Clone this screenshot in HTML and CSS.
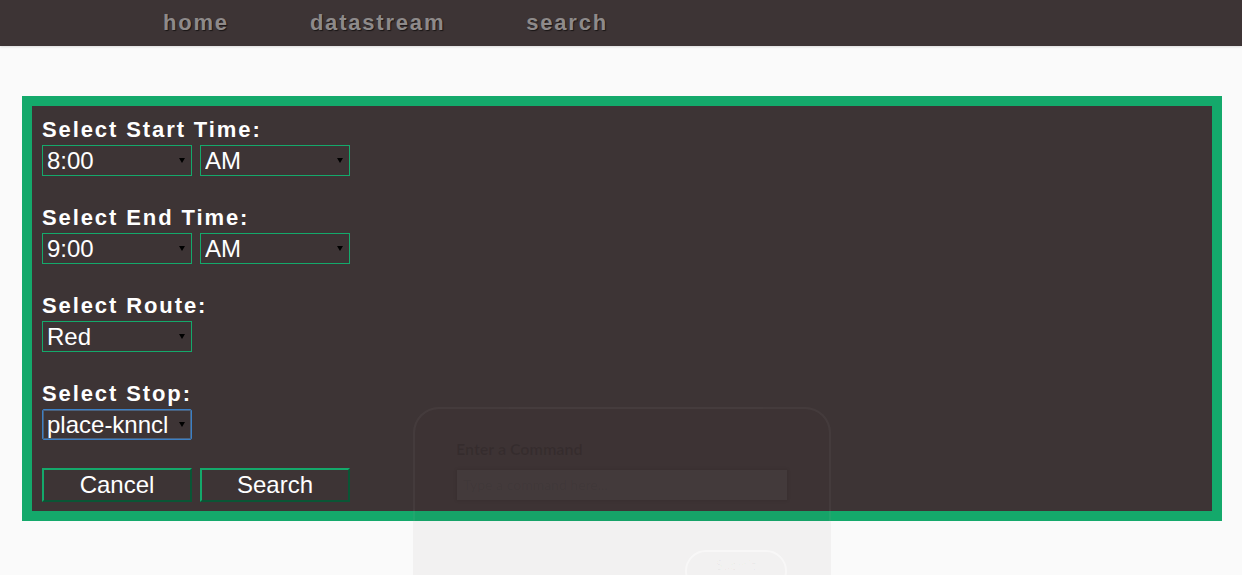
FILE: index.html
```html
<!DOCTYPE html>
<html lang="en">
<head>
<meta charset="utf-8">
<title>Search</title>
<link rel="stylesheet" href="styles.css">
</head>
<body>
<nav class="topnav">
  <a class="nav-link" href="#">home</a>
  <a class="nav-link" href="#">datastream</a>
  <a class="nav-link" href="#">search</a>
</nav>

<main class="panel">
  <div class="field">
    <label class="field-label">Select Start Time:</label>
    <div class="row">
      <span class="sel"><select class="select"><option>8:00</option></select></span>
      <span class="sel"><select class="select"><option>AM</option></select></span>
    </div>
  </div>
  <div class="field">
    <label class="field-label">Select End Time:</label>
    <div class="row">
      <span class="sel"><select class="select"><option>9:00</option></select></span>
      <span class="sel"><select class="select"><option>AM</option></select></span>
    </div>
  </div>
  <div class="field">
    <label class="field-label">Select Route:</label>
    <div class="row">
      <span class="sel"><select class="select"><option>Red</option></select></span>
    </div>
  </div>
  <div class="field">
    <label class="field-label">Select Stop:</label>
    <div class="row">
      <span class="sel"><select class="select select-focus"><option>place-knncl</option></select></span>
    </div>
  </div>
  <div class="actions">
    <button class="btn" type="button">Cancel</button>
    <button class="btn" type="button">Search</button>
  </div>
</main>

<div class="modal">
  <div class="modal-title">Enter a Command</div>
  <div class="modal-input">Type a command here...</div>
  <div class="modal-actions"><span class="modal-btn">Submit</span></div>
</div>
</body>
</html>
```

FILE: styles.css
```css
html, body {
  margin: 0;
  padding: 0;
}

body {
  background: #fafafa;
  font-family: "Liberation Sans", Arial, sans-serif;
  height: 575px;
  overflow: hidden;
  position: relative;
}

.topnav {
  height: 46px;
  background: #3d3435;
  box-shadow: 0 1px 2px rgba(0, 0, 0, 0.12);
  display: flex;
  gap: 81px;
  padding-left: 163px;
}

.nav-link {
  font-weight: bold;
  font-size: 22px;
  line-height: 46px;
  letter-spacing: 1.8px;
  color: #8e8a8a;
  text-decoration: none;
  text-shadow: 1px 1px 1px rgba(0, 0, 0, 0.6);
}

.panel {
  display: block;
  box-sizing: border-box;
  width: 1200px;
  margin: 50px 20px 0 22px;
  border: 10px solid #14a96b;
  background: #3d3435;
  padding: 11px 10px 9px;
}

.field {
  margin-bottom: 29px;
}

.field:nth-last-child(2) {
  margin-bottom: 28px;
}

.field-label {
  display: block;
  color: #fff;
  font-weight: bold;
  font-size: 22px;
  line-height: 25px;
  letter-spacing: 1.9px;
  margin-bottom: 3px;
}

.row {
  display: flex;
  gap: 8px;
}

.sel {
  position: relative;
  display: block;
  width: 150px;
  height: 31px;
}

.sel::after {
  content: "";
  position: absolute;
  right: 7px;
  top: 13px;
  width: 0;
  height: 0;
  border-left: 3px solid transparent;
  border-right: 3px solid transparent;
  border-top: 5px solid #000;
  pointer-events: none;
}

.select {
  -webkit-appearance: none;
  appearance: none;
  box-sizing: border-box;
  width: 150px;
  height: 31px;
  margin: 0;
  border: 1px solid #14a96b;
  border-radius: 0;
  background: transparent;
  color: #fff;
  font-family: "Liberation Sans", Arial, sans-serif;
  font-size: 24px;
  padding: 0 3px 0 4px;
  line-height: 29px;
  outline: none;
}

.select-focus {
  border-color: #3b80c6;
  border-radius: 2px;
  box-shadow: inset 0 0 0 1px rgba(90, 150, 210, 0.45);
}

.actions {
  display: flex;
  gap: 8px;
}

.btn {
  box-sizing: border-box;
  width: 150px;
  height: 34px;
  margin: 0;
  padding: 0;
  border: 2px outset #14a96b;
  background: transparent;
  color: #fff;
  font-family: "Liberation Sans", Arial, sans-serif;
  font-size: 24px;
  line-height: 30px;
}

.modal {
  position: absolute;
  left: 413px;
  top: 407px;
  width: 418px;
  height: 168px;
  overflow: hidden;
  box-sizing: border-box;
  border: 2px solid rgba(255, 255, 255, 0.045);
  border-bottom: none;
  border-radius: 26px 26px 0 0;
  background: rgba(61, 52, 53, 0.045);
  padding: 30px 0 0 41px;
  font-family: Lato, "Open Sans", sans-serif;
}

.modal-title {
  font-weight: bold;
  font-size: 16px;
  line-height: 19px;
  color: rgba(0, 0, 0, 0.12);
}

.modal-input {
  box-sizing: border-box;
  width: 330px;
  height: 30px;
  margin: 12px 0 0 1px;
  padding-left: 6px;
  background: rgba(255, 255, 255, 0.035);
  box-shadow: 0 0 3px 1px rgba(0, 0, 0, 0.08);
  font-size: 14px;
  line-height: 30px;
  color: rgba(0, 0, 0, 0.05);
}

.modal-actions {
  display: flex;
  justify-content: flex-end;
  width: 331px;
  margin-top: 50px;
}

.modal-btn {
  box-sizing: border-box;
  width: 102px;
  height: 42px;
  border: 2px solid rgba(255, 255, 255, 0.45);
  border-radius: 21px;
  text-align: center;
  font-size: 13px;
  line-height: 26px;
  color: rgba(0, 0, 0, 0.03);
}
```
